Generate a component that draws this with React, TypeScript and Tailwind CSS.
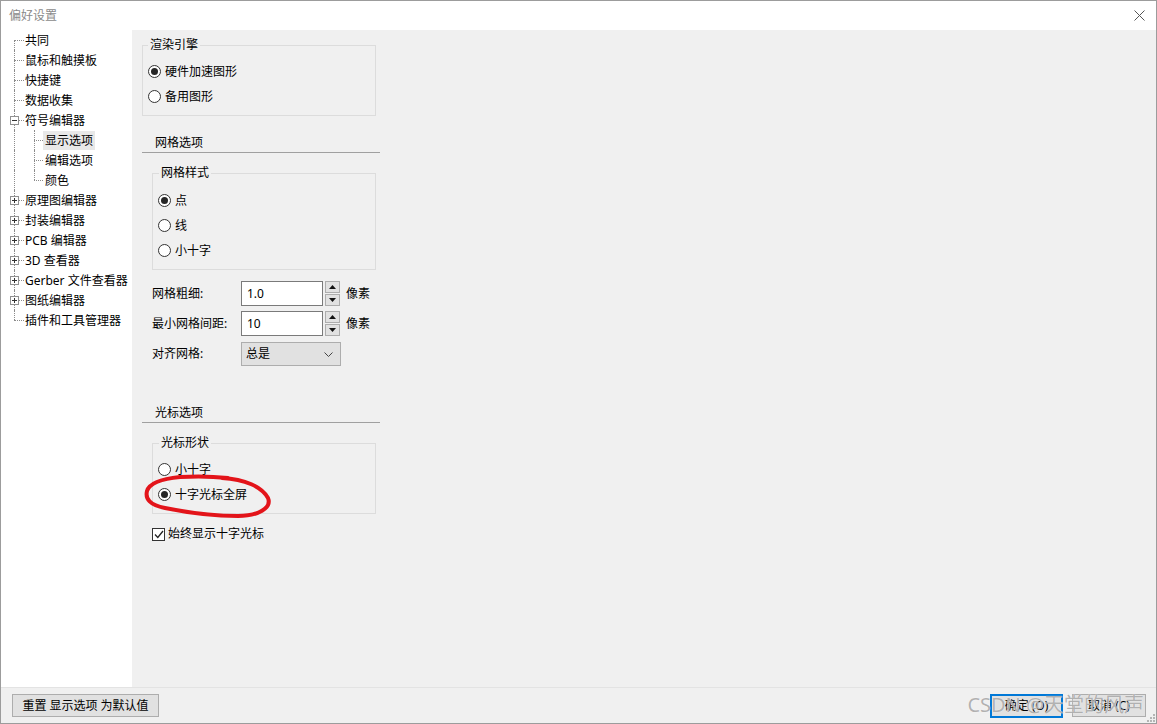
import React from 'react';

type TreeItem = {
  label: string;
  level: 1 | 2;
  box?: 'plus' | 'minus';
  selected?: boolean;
  lastChild?: boolean;
};

const tree: TreeItem[] = [
  { label: '共同', level: 1 },
  { label: '鼠标和触摸板', level: 1 },
  { label: '快捷键', level: 1 },
  { label: '数据收集', level: 1 },
  { label: '符号编辑器', level: 1, box: 'minus' },
  { label: '显示选项', level: 2, selected: true },
  { label: '编辑选项', level: 2 },
  { label: '颜色', level: 2, lastChild: true },
  { label: '原理图编辑器', level: 1, box: 'plus' },
  { label: '封装编辑器', level: 1, box: 'plus' },
  { label: 'PCB 编辑器', level: 1, box: 'plus' },
  { label: '3D 查看器', level: 1, box: 'plus' },
  { label: 'Gerber 文件查看器', level: 1, box: 'plus' },
  { label: '图纸编辑器', level: 1, box: 'plus' },
  { label: '插件和工具管理器', level: 1 },
];

function TreeRow({ item, first, last }: { item: TreeItem; first: boolean; last: boolean }) {
  return (
    <div className="relative h-5 flex items-center">
      {/* main trunk */}
      <span
        className={`absolute left-[13px] w-0 border-l border-dotted border-[#8c8c8c] ${first ? 'top-1/2' : 'top-0'} ${last ? 'bottom-1/2' : 'bottom-0'}`}
      />
      {item.level === 1 && (
        <span className="absolute left-[13px] top-[10px] w-[10px] h-0 border-t border-dotted border-[#8c8c8c]" />
      )}
      {item.level === 2 && (
        <>
          <span
            className={`absolute left-[33px] w-0 border-l border-dotted border-[#8c8c8c] top-0 ${item.lastChild ? 'bottom-1/2' : 'bottom-0'}`}
          />
          <span className="absolute left-[33px] top-[10px] w-[9px] h-0 border-t border-dotted border-[#8c8c8c]" />
        </>
      )}
      {item.box && (
        <span className="absolute left-[9px] top-[6px] w-[9px] h-[9px] border border-[#919191] bg-white flex items-center justify-center">
          <span className="relative w-[5px] h-[5px] flex items-center justify-center">
            <span className="absolute w-[5px] h-px bg-[#333]" />
            {item.box === 'plus' && <span className="absolute h-[5px] w-px bg-[#333]" />}
          </span>
        </span>
      )}
      <span
        className={`${item.level === 1 ? 'ml-[24px]' : 'ml-[42px] px-[2px]'} leading-[19px] ${item.selected ? 'bg-[#e8e8e8]' : ''}`}
      >
        {item.label}
      </span>
    </div>
  );
}

function Radio({ checked, label }: { checked?: boolean; label: string }) {
  return (
    <div className="h-[25px] flex items-center">
      <span className="w-[13px] h-[13px] rounded-full border border-[#333] bg-white flex items-center justify-center">
        {checked && <span className="w-[7px] h-[7px] rounded-full bg-[#262626]" />}
      </span>
      <span className="ml-[4px] leading-[16px]">{label}</span>
    </div>
  );
}

function Spinner() {
  return (
    <div className="ml-[2px] w-[15px] h-[25px] flex flex-col justify-between">
      <div className="h-[12px] border border-[#adadad] bg-[#e1e1e1] flex items-center justify-center">
        <svg width="7" height="4" viewBox="0 0 7 4">
          <path d="M0 4 L3.5 0 L7 4 Z" fill="#111" />
        </svg>
      </div>
      <div className="h-[12px] border border-[#adadad] bg-[#e1e1e1] flex items-center justify-center">
        <svg width="7" height="4" viewBox="0 0 7 4">
          <path d="M0 0 L3.5 4 L7 0 Z" fill="#111" />
        </svg>
      </div>
    </div>
  );
}

function NumberRow({ label, value, className }: { label: string; value: string; className?: string }) {
  return (
    <div className={`ml-[10px] flex items-center ${className ?? ''}`}>
      <span className="w-[89px] leading-[16px]">{label}</span>
      <div className="w-[82px] h-[25px] border border-[#7a7a7a] bg-white flex items-center pl-[5px]">
        {value}
      </div>
      <Spinner />
      <span className="ml-[6px] leading-[16px]">像素</span>
    </div>
  );
}

export default function App() {
  return (
    <div className="relative w-[1157px] h-[724px] border border-[#9c9c9c] bg-[#f0f0f0] flex flex-col text-[12px] text-black font-['Noto_Sans','Noto_Sans_CJK_SC',sans-serif] overflow-hidden">
      {/* Title bar */}
      <div className="h-[29px] bg-white flex items-center justify-between pl-[8px] pr-[10px]">
        <span className="text-[#8a8a8a] leading-[16px]">偏好设置</span>
        <svg width="11" height="11" viewBox="0 0 11 11" className="mr-[1px]">
          <path d="M0.5 0.5 L10.5 10.5 M10.5 0.5 L0.5 10.5" stroke="#555" strokeWidth="1" />
        </svg>
      </div>

      <div className="flex flex-1 min-h-0">
        {/* Tree */}
        <div className="w-[131px] bg-white">
          {tree.map((item, i) => (
            <TreeRow key={item.label} item={item} first={i === 0} last={i === tree.length - 1} />
          ))}
        </div>

        {/* Settings */}
        <div className="relative flex-1 pl-[10px] pt-[7px]">
          <fieldset className="w-[234px] border border-[#dcdcdc] pl-[5px] pb-[6px]">
            <legend className="px-[2px] leading-[16px]">渲染引擎</legend>
            <div className="pt-[6px]">
              <Radio checked label="硬件加速图形" />
              <Radio label="备用图形" />
            </div>
          </fieldset>

          <div className="mt-[19px] w-[238px] border-b border-[#a0a0a0] pl-[13px] pb-[1px] leading-[16px]">
            网格选项
          </div>

          <fieldset className="mt-[12px] ml-[10px] w-[224px] border border-[#dcdcdc] pl-[5px] pb-[6px]">
            <legend className="ml-[1px] px-[2px] leading-[16px]">网格样式</legend>
            <div className="pt-[7px]">
              <Radio checked label="点" />
              <Radio label="线" />
              <Radio label="小十字" />
            </div>
          </fieldset>

          <NumberRow className="mt-[11px]" label="网格粗细:" value="1.0" />
          <NumberRow className="mt-[5px]" label="最小网格间距:" value="10" />

          <div className="mt-[6px] ml-[10px] flex items-center">
            <span className="w-[89px] leading-[16px]">对齐网格:</span>
            <div className="w-[100px] h-[24px] border border-[#adadad] bg-[#e1e1e1] flex items-center justify-between pl-[4px] pr-[7px]">
              <span>总是</span>
              <svg width="9" height="5" viewBox="0 0 9 5">
                <path d="M0.5 0.5 L4.5 4.5 L8.5 0.5" stroke="#444" strokeWidth="1" fill="none" />
              </svg>
            </div>
          </div>

          <div className="mt-[39px] w-[238px] border-b border-[#a0a0a0] pl-[13px] pb-[1px] leading-[16px]">
            光标选项
          </div>

          <fieldset className="mt-[12px] ml-[10px] w-[224px] border border-[#dcdcdc] pl-[5px] pb-[6px]">
            <legend className="ml-[1px] px-[2px] leading-[16px]">光标形状</legend>
            <div className="pt-[6px]">
              <Radio label="小十字" />
              <Radio checked label="十字光标全屏" />
            </div>
          </fieldset>

          <div className="mt-[10px] ml-[10px] h-[20px] flex items-center">
            <span className="w-[13px] h-[13px] border border-[#333] bg-white flex items-center justify-center">
              <svg width="10" height="9" viewBox="0 0 10 9">
                <path d="M1 4.5 L3.8 7.5 L9 1" stroke="#222" strokeWidth="1.3" fill="none" />
              </svg>
            </span>
            <span className="ml-[3px] leading-[16px]">始终显示十字光标</span>
          </div>

          {/* hand-drawn red annotation */}
          <svg
            className="absolute left-[6px] top-[437px] pointer-events-none"
            width="140"
            height="60"
            viewBox="138 466 140 60"
          >
            <path
              d="M222 477 C245 478, 262 486, 268 497 C272 507, 258 515, 238 515 C215 515, 185 511, 165 507 C150 504, 145 498, 147 490 C149 483, 160 478, 180 476 C195 475, 210 475, 228 477"
              stroke="#e3141a"
              strokeWidth="4"
              fill="none"
              strokeLinecap="round"
            />
          </svg>
        </div>
      </div>

      {/* Footer */}
      <div className="relative h-[36px] border-t border-[#e3e3e3] flex items-center justify-between pl-[11px] pr-[10px]">
        <button className="w-[147px] h-[23px] border border-[#adadad] bg-[#e1e1e1] leading-[16px]">
          重置 显示选项 为默认值
        </button>
        <div className="flex items-center gap-[9px]">
          <button className="w-[73px] h-[24px] border-2 border-[#0078d7] bg-[#e1e1e1] leading-[16px]">确定 (O)</button>
          <button className="w-[74px] h-[23px] border border-[#adadad] bg-[#e1e1e1] leading-[16px]">取消 (C)</button>
        </div>
        <span className="absolute right-[12px] top-[5px] text-[20px] leading-[24px] text-[#8f8f8f]/70 [text-shadow:0_0_1px_#fff] pointer-events-none">
          CSDN @天堂的风声
        </span>
        <svg className="absolute right-[1px] bottom-[1px]" width="8" height="8" viewBox="0 0 8 8">
          <rect x="6" y="0" width="2" height="2" fill="#b5b5b5" />
          <rect x="3" y="3" width="2" height="2" fill="#b5b5b5" />
          <rect x="6" y="3" width="2" height="2" fill="#b5b5b5" />
          <rect x="0" y="6" width="2" height="2" fill="#b5b5b5" />
          <rect x="3" y="6" width="2" height="2" fill="#b5b5b5" />
          <rect x="6" y="6" width="2" height="2" fill="#b5b5b5" />
        </svg>
      </div>
    </div>
  );
}
